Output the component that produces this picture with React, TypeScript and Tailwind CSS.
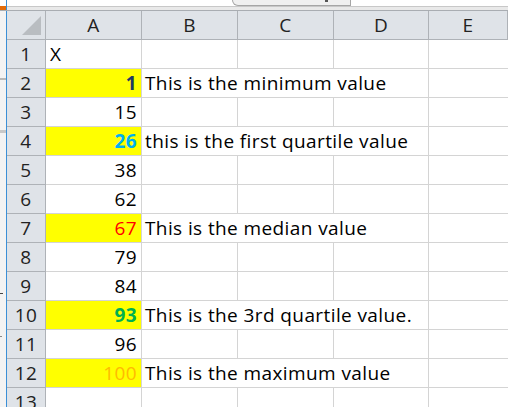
import React from 'react';

type Row = {
  n: number;
  a?: string;
  aClass?: string;
  yellow?: boolean;
  note?: string;
};

const rows: Row[] = [
  { n: 1, a: 'X', aClass: 'justify-start text-black' },
  { n: 2, a: '1', aClass: 'justify-end font-bold text-[#1f3864]', yellow: true, note: 'This is the minimum value' },
  { n: 3, a: '15' },
  { n: 4, a: '26', aClass: 'justify-end font-bold text-[#00b0f0]', yellow: true, note: 'this is the first quartile value' },
  { n: 5, a: '38' },
  { n: 6, a: '62' },
  { n: 7, a: '67', aClass: 'justify-end text-[#ff0000]', yellow: true, note: 'This is the median value' },
  { n: 8, a: '79' },
  { n: 9, a: '84' },
  { n: 10, a: '93', aClass: 'justify-end font-bold text-[#00b050]', yellow: true, note: 'This is the 3rd quartile value.' },
  { n: 11, a: '96' },
  { n: 12, a: '100', aClass: 'justify-end text-[#ffbb00]', yellow: true, note: 'This is the maximum value' },
  { n: 13 },
];

const cols = ['A', 'B', 'C', 'D', 'E'];

const cell = 'h-[29px] border-b border-r border-[#d4d4d4]';
const head = 'h-[29px] flex items-center justify-center bg-[#dfe3e8] text-[#222] border-b border-r border-[#aeb2b7]';

export default function App() {
  return (
    <div
      className="h-[407px] w-[508px] overflow-hidden bg-white text-[19px] leading-none tracking-[0.4px]"
      style={{ fontFamily: '"Open Sans", "Noto Sans", sans-serif' }}
    >
      {/* top strip: formula bar edge */}
      <div className="flex h-[11px] border-b border-[#a9adb2]">
        <div className="flex w-[7px] shrink-0 flex-col border-r border-[#3b8fd6]">
          <div className="h-[6px] bg-white" />
          <div className="flex-1 bg-[#e46c0a]" />
        </div>
        <div className="flex flex-1 flex-col">
          <div className="flex h-[7px] border-b border-[#c8c8c8]">
            <div className="w-[225px]" />
            <div className="flex h-full w-[119px] items-start justify-end rounded-bl-[10px] border-b border-l border-r border-[#a6a6a6] bg-[#f0f0f0] pr-[22px]">
              <div className="h-[2px] w-[3px] bg-[#555]" />
            </div>
          </div>
          <div className="flex-1 bg-[#e9e9e9]" />
        </div>
      </div>

      <div className="flex">
        {/* left edge */}
        <div className="flex w-[7px] shrink-0 flex-col border-r border-[#3b8fd6] bg-[#f3f3f3]">
          <div className="mt-[67px] h-[2px] w-[6px] bg-[#b8b8b8]" />
          <div className="mt-[50px] h-[3px] w-[6px] bg-[#c8c8c8]" />
          <div className="ml-0 mt-[160px] h-[1px] w-[3px] bg-[#444]" />
          <div className="mt-[42px] h-[1px] w-[2px] bg-[#888]" />
        </div>

        <div className="grid flex-1 grid-cols-[39px_96px_96px_96px_95px_1fr]">
          {/* header row */}
          <div className={`${head} items-end justify-end p-[4px]`}>
            <div
              className="h-[19px] w-[19px] bg-[#b9bdc1]"
              style={{ clipPath: 'polygon(100% 0, 100% 100%, 0 100%)' }}
            />
          </div>
          {cols.map((c) => (
            <div key={c} className={`${head} last:border-r-0`}>
              {c}
            </div>
          ))}

          {rows.map((r) => (
            <React.Fragment key={r.n}>
              <div className={head}>{r.n}</div>
              <div
                className={`${cell} flex items-center px-[4px] pt-[1px] ${r.aClass ?? 'justify-end text-black'} ${
                  r.yellow ? 'bg-[#ffff00]' : ''
                }`}
              >
                {r.a}
              </div>
              {r.note ? (
                <div className={`${cell} col-span-3 flex items-center whitespace-nowrap px-[3px] pt-[1px] text-black`}>
                  {r.note}
                </div>
              ) : (
                <>
                  <div className={cell} />
                  <div className={cell} />
                  <div className={cell} />
                </>
              )}
              <div className={`${cell} border-r-0`} />
            </React.Fragment>
          ))}
        </div>
      </div>
    </div>
  );
}
